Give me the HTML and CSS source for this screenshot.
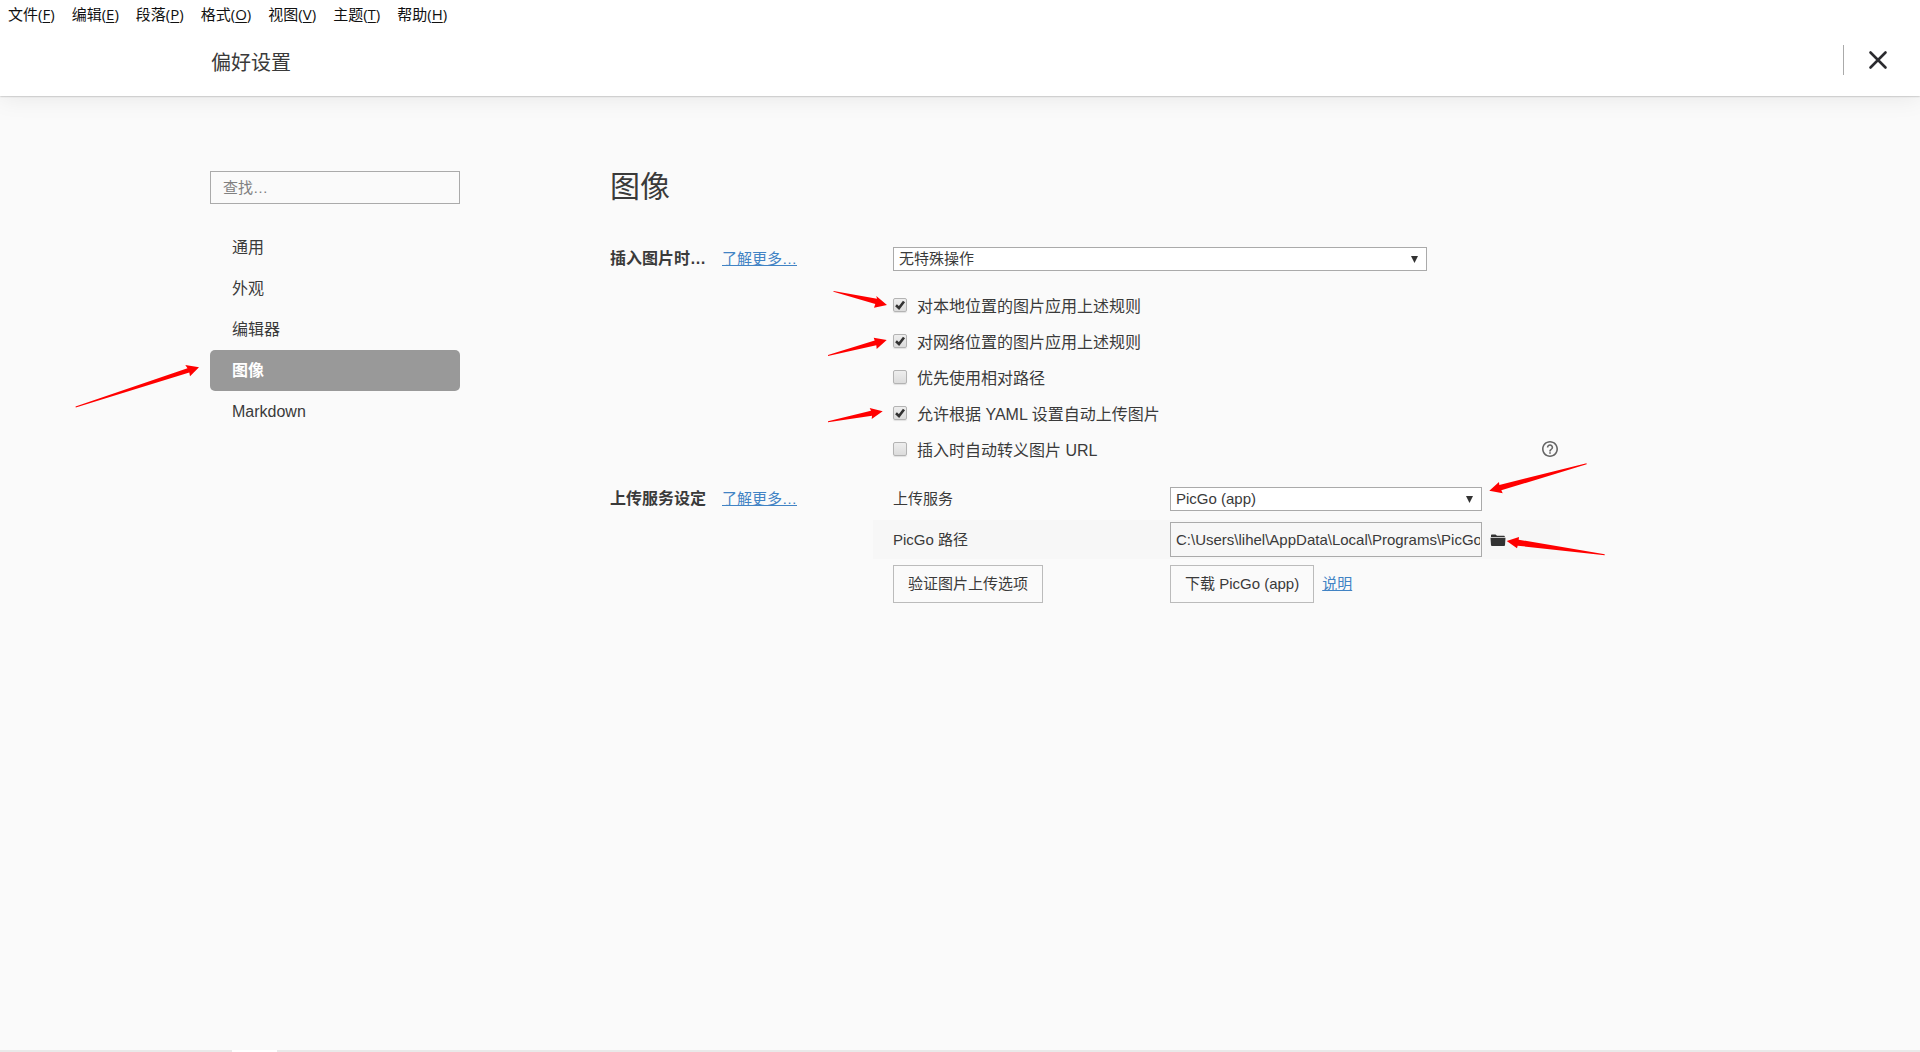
FILE: index.html
```html
<!DOCTYPE html>
<html lang="zh-CN">
<head>
<meta charset="utf-8">
<meta name="viewport" content="width=device-width, initial-scale=1">
<title>偏好设置</title>
<link rel="stylesheet" href="styles.css">
</head>
<body>
<nav class="menubar">
  <button type="button">文件(<u>F</u>)</button>
  <button type="button">编辑(<u>E</u>)</button>
  <button type="button">段落(<u>P</u>)</button>
  <button type="button">格式(<u>O</u>)</button>
  <button type="button">视图(<u>V</u>)</button>
  <button type="button">主题(<u>T</u>)</button>
  <button type="button">帮助(<u>H</u>)</button>
</nav>
<header class="header">
  <h1 class="header-title">偏好设置</h1>
  <button type="button" class="close" aria-label="关闭">
    <svg width="20" height="20" viewBox="0 0 20 20"><path d="M2.500 2.500L17.500 17.500M17.500 2.500L2.500 17.500" stroke="#2b2b2f" stroke-width="2.600" stroke-linecap="round" fill="none"/></svg>
  </button>
</header>
<main class="main">
  <aside class="sidebar">
    <input class="search" type="text" placeholder="查找…" aria-label="查找">
    <nav class="nav">
      <a href="#general">通用</a>
      <a href="#appearance">外观</a>
      <a href="#editor">编辑器</a>
      <a href="#image" class="active">图像
        <svg class="arrow arrow-nav" width="126" height="44" viewBox="0 0 126 44"><path d="M.5 43.500L112.500 5.200L110.300 2L124 4.300L115 13.300L114.300 9.600L.8 44.500Z"/></svg>
      </a>
      <a href="#markdown">Markdown</a>
    </nav>
  </aside>
  <section class="content">
    <h2 class="title">图像</h2>
    <div class="group">
      <div class="group-head"><label for="insert">插入图片时…</label><a class="link" href="#insert-help">了解更多…</a></div>
      <div class="group-body">
        <div class="select select-wide">
          <select id="insert"><option>无特殊操作</option></select>
          <svg class="caret" width="7" height="7" viewBox="0 0 7 7"><path d="M0 0H7L3.500 7Z"/></svg>
        </div>
        <ul class="checks">
          <li>
            <label><input type="checkbox" checked>对本地位置的图片应用上述规则</label>
            <svg class="arrow arrow-check" width="60" height="24" viewBox="0 0 60 24"><path d="M.5 2L44 9.700L43.300 7L54 16L41 18.700L42.300 15L.5 2.800Z"/></svg>
          </li>
          <li>
            <label><input type="checkbox" checked>对网络位置的图片应用上述规则</label>
            <svg class="arrow arrow-check arrow-low" width="60" height="24" viewBox="0 0 60 24"><path d="M-5 18L41.700 3.500L40.700 .7L53.700 3L43.700 12L43.300 8.300L-5 19Z"/></svg>
          </li>
          <li><label><input type="checkbox">优先使用相对路径</label></li>
          <li>
            <label><input type="checkbox" checked>允许根据 YAML 设置自动上传图片</label>
            <svg class="arrow arrow-check arrow-low" width="60" height="24" viewBox="0 0 60 24"><path d="M-5 12.300L38 1.700L36.700 -1L49.700 2.300L38.700 10L39 6.700L-5 13.300Z"/></svg>
          </li>
          <li>
            <label><input type="checkbox">插入时自动转义图片 URL</label>
            <button type="button" class="help" aria-label="帮助">
              <svg width="16" height="16" viewBox="2 2 20 20"><path d="M11 18h2v-2h-2v2zm1-16C6.480 2 2 6.480 2 12s4.480 10 10 10 10-4.480 10-10S17.520 2 12 2zm0 18c-4.410 0-8-3.590-8-8s3.590-8 8-8 8 3.590 8 8-3.590 8-8 8zm0-14c-2.210 0-4 1.790-4 4h2c0-1.100.9-2 2-2s2 .9 2 2c0 2-3 1.750-3 5h2c0-2.250 3-2.500 3-5 0-2.210-1.790-4-4-4z" fill="#666"/></svg>
            </button>
          </li>
        </ul>
      </div>
    </div>
    <div class="group">
      <div class="group-head"><h3>上传服务设定</h3><a class="link" href="#upload-help">了解更多…</a></div>
      <div class="group-body">
        <div class="row">
          <label for="service">上传服务</label>
          <div class="select">
            <select id="service"><option>PicGo (app)</option></select>
            <svg class="caret" width="7" height="7" viewBox="0 0 7 7"><path d="M0 0H7L3.500 7Z"/></svg>
            <svg class="arrow arrow-select" width="102" height="34" viewBox="0 0 102 34"><path d="M99.500 1.300L12.300 23L12 20L2.300 28.700L15.700 31.300L14.300 28.300L99.700 2.300Z"/></svg>
          </div>
        </div>
        <div class="row row-path">
          <label for="path">PicGo 路径</label>
          <input class="path" id="path" type="text" value="C:\Users\lihel\AppData\Local\Programs\PicGo\PicGo.exe">
          <button type="button" class="folder" aria-label="选择文件">
            <svg width="16" height="12" viewBox="0 0 16 12"><path d="M1 2.500V1.300Q1 .5 1.800 .5H5.500L7 1.700H14Q14.800 1.700 14.800 2.500V3H1ZM.5 3.700H15.500L15 11.200Q14.900 12 14 12H2Q1.100 12 1 11.200Z" fill="#333"/></svg>
            <svg class="arrow arrow-folder" width="102" height="22" viewBox="0 0 102 22"><path d="M99.700 19.300L13.700 4.700L14 2L1.700 6L12 13.300L12.700 10.700L99.700 20.300Z"/></svg>
          </button>
        </div>
        <div class="row row-actions">
          <div><button type="button" class="btn">验证图片上传选项</button></div>
          <div class="download"><button type="button" class="btn">下载 PicGo (app)</button><a class="link" href="#readme">说明</a></div>
        </div>
      </div>
    </div>
  </section>
</main>
<footer class="edge"><span></span></footer>
</body>
</html>
```
FILE: styles.css
```css
* {
  box-sizing: border-box;
}

body {
  margin: 0;
  min-height: 100vh;
  display: flex;
  flex-direction: column;
  background: #fafafa;
  color: #3a3a3a;
  font: 15px/24px "Liberation Sans", "Noto Sans CJK SC", sans-serif;
}

button,
input,
select {
  margin: 0;
  font: inherit;
  color: inherit;
}

button {
  padding: 0;
  border: 0;
  background: none;
}

.menubar {
  position: relative;
  z-index: 1;
  display: flex;
  gap: 17px;
  height: 30px;
  padding: 0 8px 2px;
  background: #fff;
  color: #111;
  font-family: "Open Sans", "Noto Sans CJK SC", sans-serif;
}

.menubar u {
  text-underline-offset: 2px;
}

.header {
  display: flex;
  align-items: center;
  justify-content: space-between;
  height: 66px;
  padding: 0 32px 0 211px;
  background: #fff;
  box-shadow: 0 0 2px rgba(0, 0, 0, .4), 0 2px 24px rgba(0, 0, 0, .08);
}

.header-title {
  margin: 0;
  font-size: 20px;
  font-weight: 400;
}

.close {
  display: flex;
  align-items: center;
  height: 30px;
  margin-bottom: 6px;
  padding-left: 24px;
  border-left: 1px solid #aaa;
}

.main {
  flex: 1;
  display: grid;
  grid-template-columns: 250px minmax(0, 950px);
  column-gap: 150px;
  align-items: start;
  padding: 69px 20px 40px 210px;
}

.search {
  display: block;
  width: 100%;
  height: 33px;
  margin: 6px 0 23px;
  padding: 0 12px;
  border: 1px solid #aaa;
  background: transparent;
}

.search::placeholder {
  color: #808080;
}

.nav {
  display: flex;
  flex-direction: column;
  font-size: 16px;
}

.nav a {
  position: relative;
  height: 41px;
  padding-left: 22px;
  line-height: 41px;
  color: inherit;
  text-decoration: none;
}

.nav .active {
  border-radius: 5px;
  background: #999;
  color: #fff;
  font-weight: 700;
}

.title {
  margin: 0 0 38px;
  font-size: 30px;
  line-height: 44px;
  font-weight: 400;
}

.group {
  display: grid;
  grid-template-columns: 263px minmax(0, 1fr);
  margin-bottom: 18px;
}

.group-head {
  display: flex;
  align-items: baseline;
  align-self: start;
}

.group-head label,
.group-head h3 {
  width: 112px;
  margin: 0;
  font-size: 16px;
  font-weight: 700;
}

.link {
  color: #4183c4;
  text-decoration: underline;
}

.select {
  position: relative;
}

.select-wide {
  width: 534px;
  margin-left: 20px;
}

.select select {
  display: block;
  width: 100%;
  height: 24px;
  padding: 0 24px 0 5px;
  border: 1px solid #aaa;
  border-radius: 0;
  background: #fff;
  line-height: 22px;
  appearance: none;
}

.caret {
  position: absolute;
  top: 9px;
  right: 9px;
  fill: #333;
  pointer-events: none;
}

.checks {
  margin: 18px 0 0;
  padding: 0 2px 0 20px;
  list-style: none;
  font-size: 16px;
}

.checks li {
  position: relative;
  display: flex;
  align-items: center;
  justify-content: space-between;
  height: 36px;
}

.checks label {
  display: flex;
  align-items: center;
  gap: 10px;
}

.checks input {
  width: 14px;
  height: 14px;
  margin-bottom: 4px;
  border: 1px solid #b3b3b3;
  border-radius: 2px;
  background: linear-gradient(#eee, #dcdcdc);
  box-shadow: 0 1px 1px rgba(0, 0, 0, .1);
  appearance: none;
}

.checks input:checked {
  background: url("data:image/svg+xml,%3Csvg xmlns='http://www.w3.org/2000/svg' viewBox='0 0 12 12'%3E%3Cpath d='M2 6.200L5 9L10 2.500' fill='none' stroke='%23333' stroke-width='2.600'/%3E%3C/svg%3E") center / 12px 12px no-repeat, linear-gradient(#eee, #dcdcdc);
}

.help {
  display: flex;
  margin-bottom: 4px;
}

.row {
  display: grid;
  grid-template-columns: 277px 312px auto;
  align-items: center;
  justify-content: start;
  padding: 0 20px;
}

.row-path {
  height: 39px;
  margin-top: 9px;
  background: #f7f7f7;
}

.path {
  height: 35px;
  padding: 0 1px 0 5px;
  border: 1px solid #aaa;
  background: transparent;
}

.folder {
  position: relative;
  display: flex;
  margin-left: 8px;
}

.row-actions {
  margin-top: 6px;
}

.btn {
  height: 38px;
  padding: 0 14px;
  border: 1px solid #bbb;
  white-space: nowrap;
}

.download {
  display: flex;
  align-items: center;
  gap: 8px;
}

/* Red pointers, each anchored to the control it marks */
.arrow {
  position: absolute;
  overflow: visible;
  fill: #f00;
  pointer-events: none;
}

.arrow-nav {
  top: 13px;
  left: -135px;
}

.arrow-check {
  top: 0;
  left: -60px;
}

.arrow-low {
  top: 12px;
}

.arrow-select {
  top: -25px;
  left: 317px;
}

.arrow-folder {
  top: 1px;
  left: 15px;
}

.edge {
  height: 2px;
  padding-left: 232px;
  background: #e9e9e9;
}

.edge span {
  display: block;
  width: 45px;
  height: 2px;
  background: #fff;
}
```
